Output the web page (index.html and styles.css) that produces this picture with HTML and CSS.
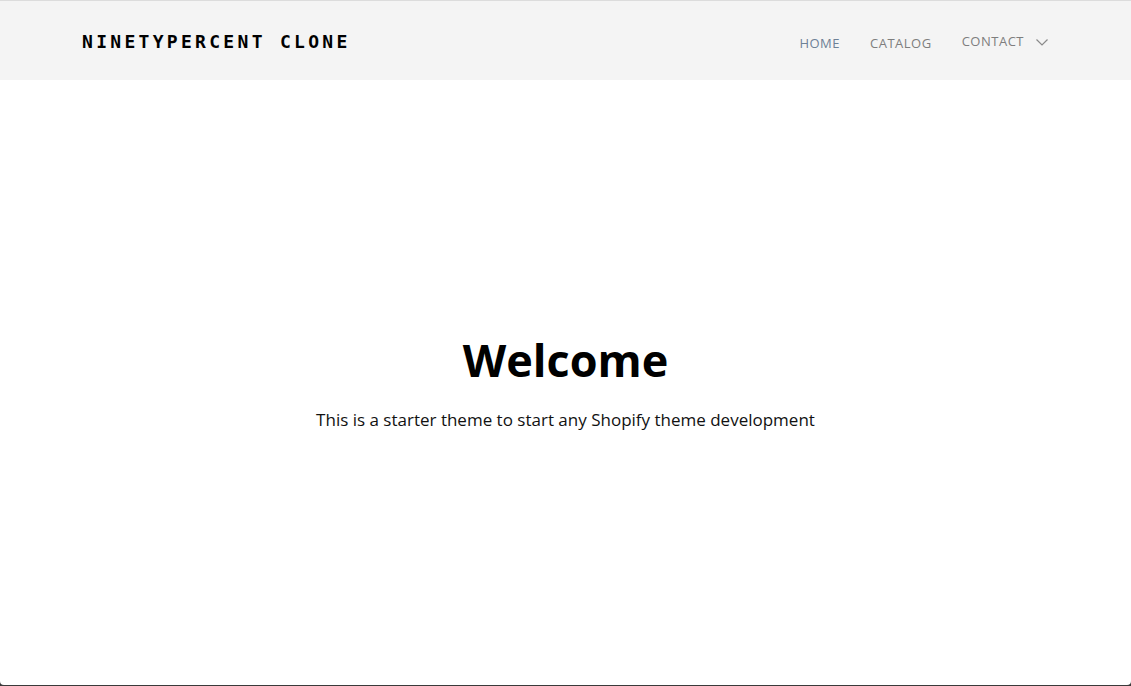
FILE: index.html
```html
<!DOCTYPE html>
<html lang="en">
<head>
<meta charset="utf-8">
<title>Ninetypercent Clone</title>
<link rel="stylesheet" href="styles.css">
</head>
<body>
<div class="window">
  <header class="site-header">
    <a class="logo" href="#">NINETYPERCENT CLONE</a>
    <nav class="nav">
      <a class="nav-link nav-link--active" href="#">HOME</a>
      <a class="nav-link" href="#">CATALOG</a>
      <a class="nav-link nav-link--dropdown" href="#">CONTACT
        <svg class="chevron" width="12" height="7" viewBox="0 0 12 7" aria-hidden="true"><path d="M0.5 0.5 L6 6 L11.5 0.5" fill="none" stroke="#8a8a8a" stroke-width="1.2"/></svg>
      </a>
    </nav>
  </header>
  <main class="hero">
    <h1 class="hero-title">Welcome</h1>
    <p class="hero-text">This is a starter theme to start any Shopify theme development</p>
  </main>
</div>
</body>
</html>
```
FILE: styles.css
```css
html, body {
  margin: 0;
  padding: 0;
  height: 100%;
  background: #3a3a3a;
}
body {
  font-family: "Open Sans", "Noto Sans", sans-serif;
}
.window {
  height: 685px;
  background: #ffffff;
  border-radius: 0 0 4px 4px;
  display: flex;
  flex-direction: column;
  overflow: hidden;
}
.site-header {
  height: 80px;
  box-sizing: border-box;
  background: #f4f4f4;
  border-top: 1px solid #dcdcdc;
  display: flex;
  align-items: center;
  justify-content: space-between;
  padding: 0 83px 0 82px;
  flex-shrink: 0;
}
.logo {
  font-family: "DejaVu Sans Mono", monospace;
  font-weight: bold;
  font-size: 18px;
  letter-spacing: 3.3px;
  color: #000;
  text-decoration: none;
  margin-top: 2px;
}
.nav {
  display: flex;
  align-items: center;
  gap: 30px;
  margin-top: 4px;
}
.nav-link {
  font-size: 13px;
  color: #7e7e7e;
  text-decoration: none;
  letter-spacing: 0.5px;
}
.nav-link--active {
  color: #6e8196;
}
.nav-link--dropdown {
  display: flex;
  align-items: center;
  gap: 12px;
  margin-top: -3px;
}
.chevron {
  margin-top: 3px;
}
.hero {
  flex: 1;
  display: flex;
  flex-direction: column;
  align-items: center;
  justify-content: center;
  padding-bottom: 2px;
}
.hero-title {
  margin: 0;
  font-size: 45px;
  font-weight: 700;
  color: #000;
  line-height: 1.25;
}
.hero-text {
  margin: 19px 0 0;
  font-size: 17px;
  color: #111;
}
```
